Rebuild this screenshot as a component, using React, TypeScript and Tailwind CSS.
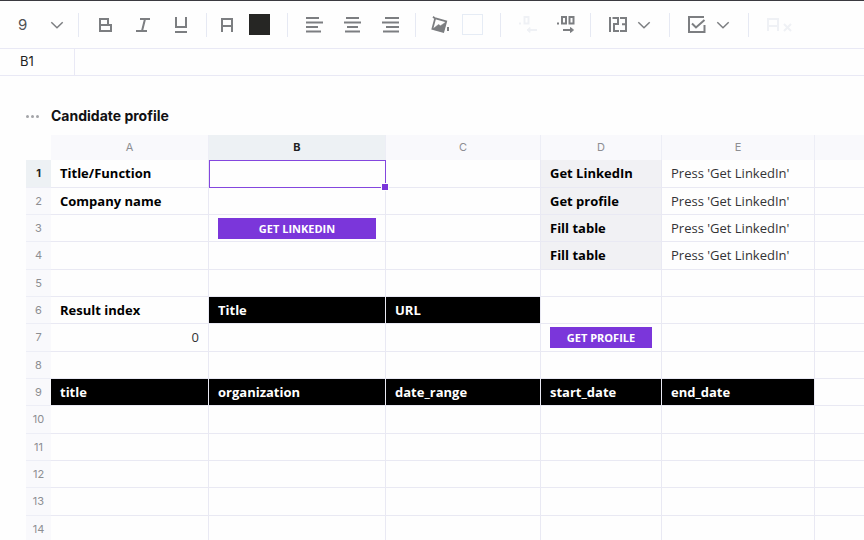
import React from "react";

type Cell = {
  text?: string;
  kind?: "bold" | "label" | "head" | "number" | "button" | "selected";
};

const columns = ["A", "B", "C", "D", "E", ""];
const selectedColumn = "B";
const selectedRow = 1;

const cells: Record<string, Cell> = {
  A1: { text: "Title/Function", kind: "bold" },
  B1: { kind: "selected" },
  D1: { text: "Get LinkedIn", kind: "label" },
  E1: { text: "Press 'Get LinkedIn'" },
  A2: { text: "Company name", kind: "bold" },
  D2: { text: "Get profile", kind: "label" },
  E2: { text: "Press 'Get LinkedIn'" },
  B3: { text: "GET LINKEDIN", kind: "button" },
  D3: { text: "Fill table", kind: "label" },
  E3: { text: "Press 'Get LinkedIn'" },
  D4: { text: "Fill table", kind: "label" },
  E4: { text: "Press 'Get LinkedIn'" },
  A6: { text: "Result index", kind: "bold" },
  B6: { text: "Title", kind: "head" },
  C6: { text: "URL", kind: "head" },
  A7: { text: "0", kind: "number" },
  D7: { text: "GET PROFILE", kind: "button" },
  A9: { text: "title", kind: "head" },
  B9: { text: "organization", kind: "head" },
  C9: { text: "date_range", kind: "head" },
  D9: { text: "start_date", kind: "head" },
  E9: { text: "end_date", kind: "head" },
};

const cellStyles = {
  plain: "text-[#333335]",
  bold: "font-bold text-black",
  label: "font-bold text-black bg-[#f1f1f4]",
  head: "font-bold text-white bg-black",
  number: "text-right text-[#333335]",
  button: "",
  selected: "relative",
};

const Icon: React.FC<{
  width: number;
  height: number;
  children: React.ReactNode;
}> = ({ width, height, children }) => (
  <svg
    width={width}
    height={height}
    viewBox={`0 0 ${width} ${height}`}
    fill="none"
    stroke="currentColor"
    strokeWidth="2"
    aria-hidden="true"
  >
    {children}
  </svg>
);

const Chevron = () => (
  <Icon width={14} height={8}>
    <path d="M1.3 1.2 7 6.8l5.7-5.6" strokeWidth="1.5" />
  </Icon>
);

const ToolButton: React.FC<{
  label: string;
  className?: string;
  disabled?: boolean;
  children: React.ReactNode;
}> = ({ label, className = "w-[38px]", disabled, children }) => (
  <button
    type="button"
    aria-label={label}
    disabled={disabled}
    className={`flex h-8 shrink-0 items-center justify-center disabled:text-[#eff1f5] ${className}`}
  >
    {children}
  </button>
);

const Divider = () => <div className="h-6 w-px shrink-0 bg-[#e6e9f3]" />;

const Toolbar = () => (
  <div className="flex h-[49px] shrink-0 items-center overflow-hidden border-t border-b border-t-[#3b3a40] border-b-[#e9e9f5] text-[#7c7e81]">
    <div className="relative flex w-[78px] shrink-0 items-center">
      <select
        aria-label="Font size"
        className="w-full appearance-none bg-transparent pl-[18px] text-[15px] leading-6 text-[#505155]"
      >
        <option>9</option>
      </select>
      <span className="pointer-events-none absolute right-[14px]">
        <Chevron />
      </span>
    </div>
    <Divider />
    <div className="flex pr-[6px] pl-[7px]">
      <ToolButton label="Bold">
        <Icon width={14} height={14}>
          <path d="M1 1h9v6M2 0v14M1 7h12v6H1" />
        </Icon>
      </ToolButton>
      <ToolButton label="Italic">
        <Icon width={14} height={14}>
          <path d="M4 1h10M0 13h11M9 1 6 13" />
        </Icon>
      </ToolButton>
      <ToolButton label="Underline">
        <Icon width={14} height={16}>
          <path d="M2 0v10h10V0M1 15h12" />
        </Icon>
      </ToolButton>
    </div>
    <Divider />
    <div className="flex pr-[12px] pl-[4px]">
      <ToolButton label="Text color" className="w-8">
        <Icon width={14} height={14}>
          <path d="M2 14V1h10v13M2 8h10" />
        </Icon>
      </ToolButton>
      <ToolButton label="Pick text color" className="w-8">
        <span className="size-[21px] bg-[#262624]" />
      </ToolButton>
    </div>
    <Divider />
    <div className="flex pr-[6px] pl-[7px]">
      <ToolButton label="Align left">
        <Icon width={17} height={16}>
          <path d="M0 1h13M0 5.5h17M0 10h12M0 14.5h15" />
        </Icon>
      </ToolButton>
      <ToolButton label="Align center">
        <Icon width={17} height={16}>
          <path d="M2 1h13M0 5.5h17M3 10h11M1 14.5h15" />
        </Icon>
      </ToolButton>
      <ToolButton label="Align right">
        <Icon width={17} height={16}>
          <path d="M3 1h14M0 5.5h17M4 10h13M1 14.5h16" />
        </Icon>
      </ToolButton>
    </div>
    <Divider />
    <div className="flex pr-[12px] pl-[8px]">
      <ToolButton label="Fill color" className="w-8">
        <Icon width={18} height={18}>
          <path d="M2 .8 3.8 2.2 15.2 5.4 12.3 15.8 1.4 12.8 4.2 2.3" strokeWidth="1.8" />
          <path d="M2 12.8 7.5 8.5l2 1.2L15 6l-2.700 9.800z" fill="currentColor" strokeWidth="0.5" />
          <path d="M17 11v4" />
        </Icon>
      </ToolButton>
      <ToolButton label="Pick fill color" className="w-8">
        <span className="size-[21px] border border-[#e6ecf5]" />
      </ToolButton>
    </div>
    <Divider />
    <div className="flex pr-[5px] pl-[8px]">
      <ToolButton label="Decrease decimals" disabled>
        <Icon width={18} height={17}>
          <path d="M0 7.5h2M5.5 1h4v6.5h-4zM9 14h9" />
          <path d="M11 11.5 8 14l3 2.5z" fill="currentColor" strokeWidth="1" />
        </Icon>
      </ToolButton>
      <ToolButton label="Increase decimals">
        <Icon width={18} height={17}>
          <path d="M0 7.5h2M5 1h4v6.5H5zM12.5 1h4v6.5h-4zM6 14h9" />
          <path d="M13.5 11.5 16.5 14l-3 2.5z" fill="currentColor" strokeWidth="1" />
        </Icon>
      </ToolButton>
    </div>
    <Divider />
    <ToolButton label="Number format" className="w-[78px] gap-[10px]">
      <Icon width={18} height={15}>
        <path d="M1 0v15M3.5 1H9v6H5v7h5M11 1h6v13h-6M13 7.2h4" />
      </Icon>
      <Chevron />
    </ToolButton>
    <Divider />
    <ToolButton label="Data validation" className="w-[78px] gap-[10px]">
      <Icon width={18} height={17}>
        <path d="M16 1H1v15h15.500V9M4 7.500l4 4 8.500-7.500" />
      </Icon>
      <Chevron />
    </ToolButton>
    <Divider />
    <ToolButton label="Clear formatting" className="w-[60px]" disabled>
      <Icon width={26} height={14}>
        <path d="M2 13V1h10v12M2 8h10M18 6l7 7M25 6l-7 7" />
      </Icon>
    </ToolButton>
  </div>
);

const FormulaBar = () => (
  <div className="flex h-[27px] shrink-0 border-b border-[#e9e9f5]">
    <input
      aria-label="Selected cell"
      defaultValue="B1"
      className="w-[75px] border-r border-[#e9e9f5] pl-5 text-[13px] text-[#1f1f22] outline-none"
    />
    <input aria-label="Formula" className="min-w-0 flex-1 px-3 text-[13px] outline-none" />
  </div>
);

const CellContent: React.FC<{ cell: Cell }> = ({ cell }) => {
  if (cell.kind === "button") {
    return (
      <button
        type="button"
        className="block h-[21px] w-full bg-[#7b36da] text-center text-[11px] leading-5 font-bold text-white"
      >
        {cell.text}
      </button>
    );
  }

  if (cell.kind === "selected") {
    return (
      <div className="absolute top-0 -right-px -bottom-px left-0 border border-[#8447de]">
        <span className="absolute -right-[3px] -bottom-[3px] size-[6px] bg-[#7b36da] outline outline-white" />
      </div>
    );
  }

  return <>{cell.text}</>;
};

const Sheet = () => (
  <table className="w-full min-w-[800px] table-fixed border-separate border-spacing-0">
    <colgroup>
      <col className="w-[25px]" />
      <col className="w-[158px]" />
      <col className="w-[177px]" />
      <col className="w-[155px]" />
      <col className="w-[121px]" />
      <col className="w-[153px]" />
      <col />
    </colgroup>
    <thead>
      <tr className="h-[25px] text-[11px]">
        <td className="p-0" />
        {columns.map((name) => (
          <th
            key={name}
            scope="col"
            className={`border-r border-[#edeef6] p-0 last:border-r-0 ${
              name === selectedColumn
                ? "bg-[#edf1f4] font-bold text-[#1f1f22]"
                : "bg-[#f9f9fc] font-normal text-[#8d8e92]"
            }`}
          >
            {name}
          </th>
        ))}
      </tr>
    </thead>
    <tbody>
      {Array.from({ length: 14 }, (_, i) => i + 1).map((row) => (
        <tr key={row} className="h-[27px] nth-[3n+1]:h-[28px]">
          <th
            scope="row"
            className={`border-b border-[#edeef6] p-0 text-[11px] ${
              row === selectedRow
                ? "bg-[#edf1f4] font-bold text-[#1f1f22]"
                : "bg-[#f9f9fc] font-normal text-[#8d8e92]"
            }`}
          >
            {row}
          </th>
          {columns.map((name) => {
            const cell = cells[`${name}${row}`] ?? {};
            return (
              <td
                key={name}
                className={`border-r border-b border-[#e9e9f3] px-[9px] pt-[3px] pb-0 align-top font-['Open_Sans',sans-serif] text-[13px] leading-5 whitespace-nowrap last:border-r-0 ${
                  cellStyles[cell.kind ?? "plain"]
                }`}
              >
                <CellContent cell={cell} />
              </td>
            );
          })}
        </tr>
      ))}
    </tbody>
  </table>
);

const App: React.FC = () => {
  return (
    <div className="flex h-screen flex-col overflow-hidden bg-[#fefefe] font-['Inter',sans-serif]">
      <Toolbar />
      <FormulaBar />
      <main className="min-h-0 flex-1 overflow-auto pl-[26px] [scrollbar-width:none]">
        <div className="flex items-center gap-3 pt-[30px] pb-[9px]">
          <button type="button" aria-label="Table menu" className="flex w-[13px] justify-between">
            <span className="size-[3px] rounded-full bg-[#a3a4a8]" />
            <span className="size-[3px] rounded-full bg-[#a3a4a8]" />
            <span className="size-[3px] rounded-full bg-[#a3a4a8]" />
          </button>
          <h1 className="text-[14px] leading-5 font-bold text-[#111113]">
            Candidate profile
          </h1>
        </div>
        <Sheet />
      </main>
    </div>
  );
};

export default App;
